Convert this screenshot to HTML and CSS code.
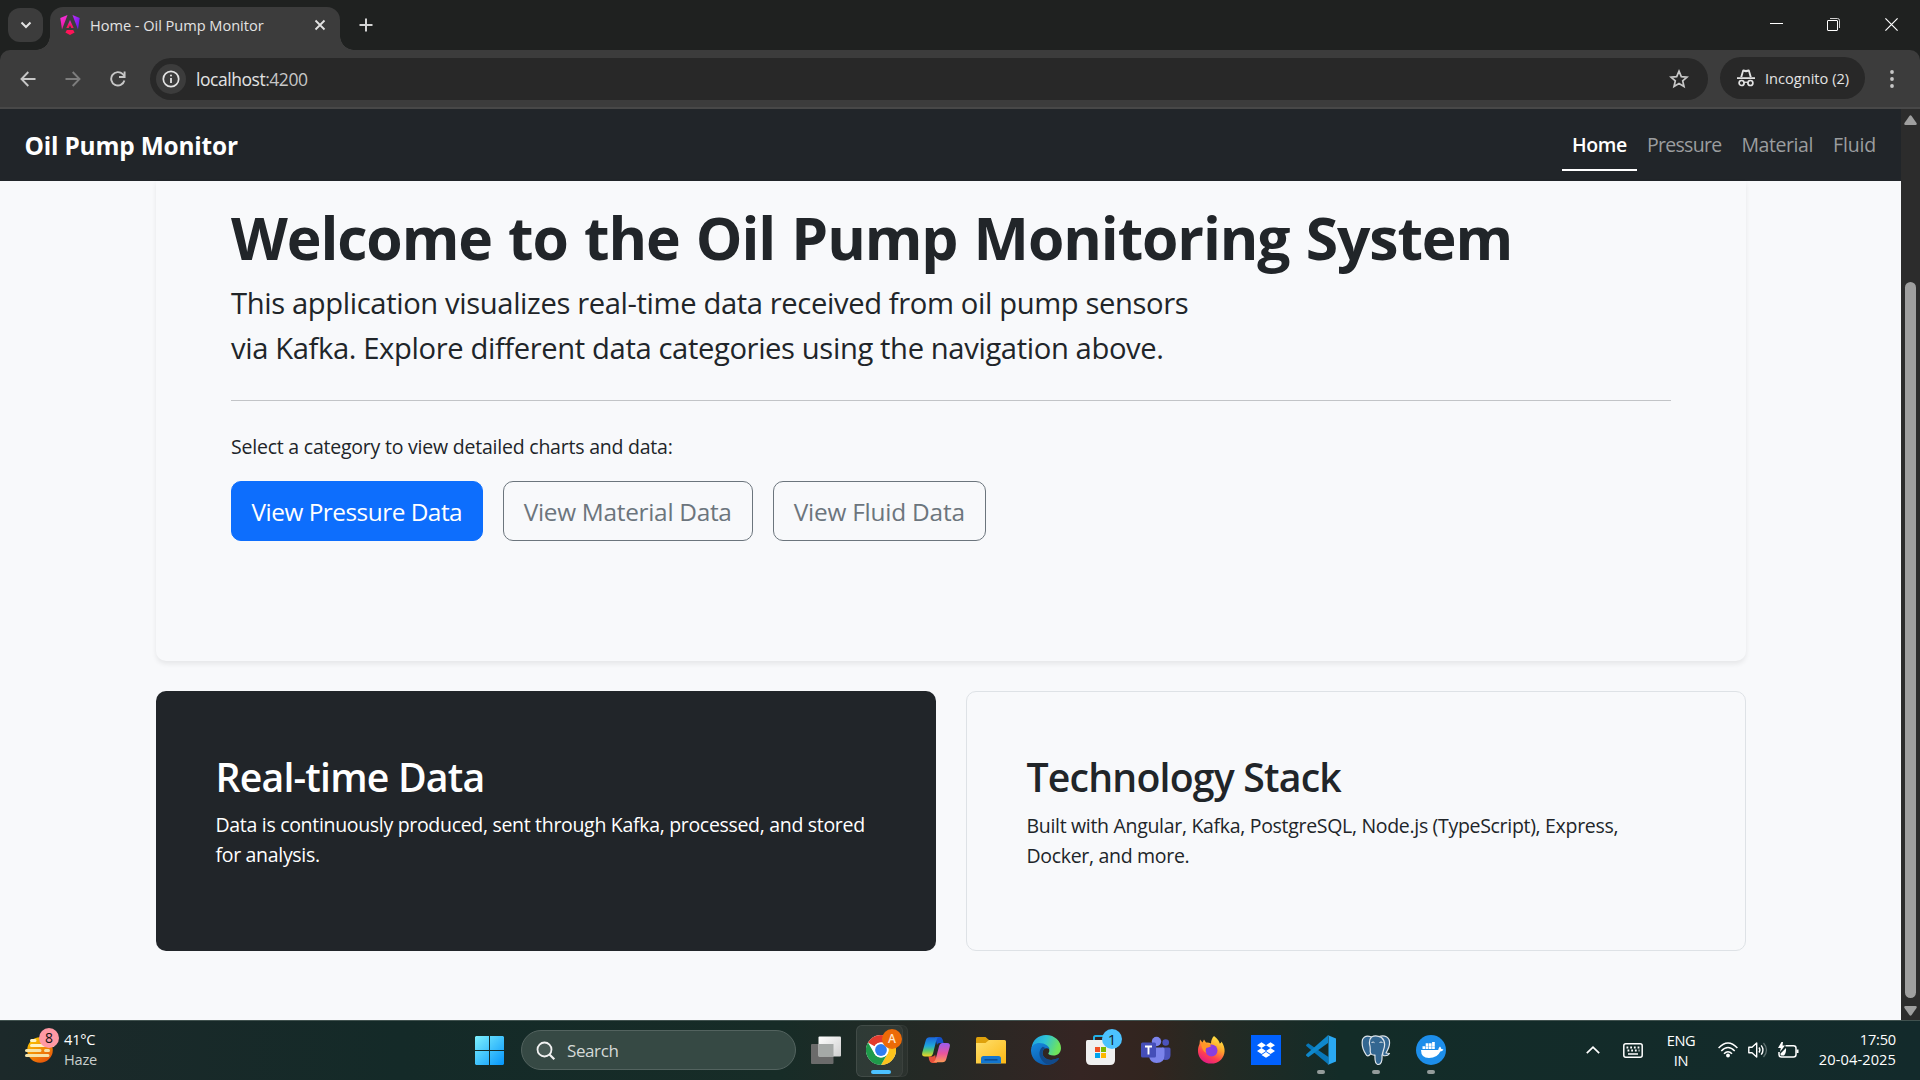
FILE: index.html
```html
<!DOCTYPE html>
<html lang="en">
<head>
<meta charset="utf-8">
<title>Home - Oil Pump Monitor</title>
<link rel="stylesheet" href="styles.css">
</head>
<body>
<div class="screen">
  <header class="tabstrip">
    <div class="tab-search"><svg width="12" height="8" viewBox="0 0 12 8"><path d="M1.5 1.5 6 6l4.500-4.500" fill="none" stroke="#e3e3e3" stroke-width="2"/></svg></div>
    <div class="tab">
      <svg class="favicon" width="20" height="20" viewBox="0 0 20 20">
        <defs>
          <linearGradient id="ngA" x1="0" y1="0" x2="0.300" y2="1"><stop offset="0" stop-color="#f535e8"/><stop offset="1" stop-color="#f0159a"/></linearGradient>
          <linearGradient id="ngB" x1="0" y1="0" x2="1" y2="1"><stop offset="0" stop-color="#c22df5"/><stop offset="1" stop-color="#5b14f0"/></linearGradient>
          <linearGradient id="ngC" x1="0" y1="0" x2="0" y2="1"><stop offset="0" stop-color="#d52be0"/><stop offset="0.700" stop-color="#fb1560"/></linearGradient>
        </defs>
        <path d="M0.300 3 7.500 0 2 14.500Z" fill="url(#ngA)"/><path d="M12.500 0 19.700 3 18 14.500Z" fill="url(#ngB)"/>
        <path d="M6.800 15H13.200L14.600 17.500 10 20 5.400 17.500Z" fill="#ff1458"/>
        <path d="M10 5 13.700 13H11.300L10 10.200 8.700 13H6.300Z" fill="url(#ngC)"/>
      </svg>
      <span class="tab-title">Home - Oil Pump Monitor</span>
      <svg class="tab-close" width="12" height="12" viewBox="0 0 12 12"><path d="M1.500 1.500l9 9m0-9l-9 9" stroke="#e3e3e3" stroke-width="1.800"/></svg>
    </div>
    <svg class="new-tab" width="14" height="14" viewBox="0 0 14 14"><path d="M7 0.500v13M0.500 7h13" stroke="#d4d4d4" stroke-width="2"/></svg>
    <div class="window-buttons">
      <svg width="13" height="13" viewBox="0 0 13 13"><path d="M0 5.500h13" stroke="#fff"/></svg>
      <svg width="13" height="13" viewBox="0 0 13 13"><path d="M3 .5h7.500a2 2 0 0 1 2 2V10" fill="none" stroke="#cfcfcf"/><rect x=".5" y="2.500" width="10" height="10" rx="0.500" fill="none" stroke="#fff"/></svg>
      <svg width="13" height="13" viewBox="0 0 13 13"><path d="M.4.4l12.200 12.200m0-12.200L.4 12.600" stroke="#fff" stroke-width="1.200"/></svg>
    </div>
  </header>

  <div class="toolbar">
    <svg class="tool back" width="16" height="16" viewBox="0 0 16 16"><path d="M15.500 8H2M8.300 1 1.500 8l6.800 7" fill="none" stroke="#c7c7c7" stroke-width="1.900"/></svg>
    <svg class="tool forward" width="16" height="16" viewBox="0 0 16 16"><path d="M.5 8H14M7.700 1l6.800 7-6.800 7" fill="none" stroke="#7d7d7d" stroke-width="1.900"/></svg>
    <svg class="tool reload" width="16" height="16" viewBox="0 0 16 16"><path d="M14.400 9.500A6.700 6.700 0 1 1 12.800 3.200L14.500 5" fill="none" stroke="#c7c7c7" stroke-width="1.900"/><path d="M14.600.5V6H9" fill="none" stroke="#c7c7c7" stroke-width="1.900"/></svg>
    <div class="address">
      <span class="site-info"><svg width="18" height="18" viewBox="0 0 18 18"><circle cx="9" cy="9" r="7.700" fill="none" stroke="#e3e3e3" stroke-width="1.700"/><path d="M9 8v5" stroke="#e3e3e3" stroke-width="1.800"/><circle cx="9" cy="5.600" r="1" fill="#e3e3e3"/></svg></span>
      <span class="url">localhost<span class="port">:4200</span></span>
      <svg class="star" width="20" height="20" viewBox="0 0 20 20"><path d="M10 2.200 12.300 7.600 18.100 8.100 13.700 11.900 15 17.600 10 14.600 5 17.600 6.300 11.900 1.900 8.100 7.700 7.600Z" fill="none" stroke="#c7c7c7" stroke-width="1.700"/></svg>
    </div>
    <div class="incognito">
      <svg width="18" height="18" viewBox="0 0 18 18"><path d="M0 8.300h18v1.700H0zM3.300 8 5.300 1.200Q5.600.3 6.600.5L9 1.100 11.400.5q1-.2 1.300.7L14.700 8h-2L11.300 2.700 9 3.200 6.700 2.700 5.300 8Z" fill="#e3e3e3"/><circle cx="4.600" cy="14" r="2.500" fill="none" stroke="#e3e3e3" stroke-width="1.700"/><circle cx="13.400" cy="14" r="2.500" fill="none" stroke="#e3e3e3" stroke-width="1.700"/><path d="M7 13.600q2-1 4 0" fill="none" stroke="#e3e3e3" stroke-width="1.400"/></svg>
      <span>Incognito (2)</span>
    </div>
    <svg class="menu" width="4" height="18" viewBox="0 0 4 18"><g fill="#c7c7c7"><circle cx="2" cy="2" r="1.900"/><circle cx="2" cy="9" r="1.900"/><circle cx="2" cy="16" r="1.900"/></g></svg>
  </div>

  <div class="viewport">
    <div class="page">
      <nav class="navbar">
        <a class="brand">Oil Pump Monitor</a>
        <div class="nav-links">
          <a class="nav-link active">Home</a><a class="nav-link pressure">Pressure</a><a class="nav-link material">Material</a><a class="nav-link fluid">Fluid</a>
        </div>
      </nav>
      <main class="content">
        <section class="hero">
          <h1>Welcome to the Oil Pump Monitoring System</h1>
          <p class="lead">This application visualizes real-time data received from oil pump sensors<br>via Kafka. Explore different data categories using the navigation above.</p>
          <hr>
          <p class="hint">Select a category to view detailed charts and data:</p>
          <div class="actions">
            <a class="btn primary">View Pressure Data</a>
            <a class="btn material-btn">View Material Data</a>
            <a class="btn fluid-btn">View Fluid Data</a>
          </div>
        </section>
        <div class="cards">
          <section class="card dark"><h2>Real-time Data</h2><p>Data is continuously produced, sent through Kafka, processed, and stored<br>for analysis.</p></section>
          <section class="card light"><h2>Technology Stack</h2><p>Built with Angular, Kafka, PostgreSQL, Node.js (TypeScript), Express,<br>Docker, and more.</p></section>
        </div>
      </main>
    </div>
    <div class="scrollbar">
      <svg width="13" height="10" viewBox="0 0 13 10"><path d="M5.400 1Q6.500-.4 7.600 1L12.500 8q.8 1.800-1 2h-10Q-.3 9.800.5 8Z" fill="#9f9f9f"/></svg>
      <div class="thumb"></div>
      <svg width="13" height="10" viewBox="0 0 13 10"><path d="M5.400 9Q6.500 10.400 7.600 9L12.500 2q.8-1.800-1-2h-10Q-.3.2.5 2Z" fill="#9f9f9f"/></svg>
    </div>
  </div>

  <footer class="taskbar">
    <div class="weather">
      <div class="weather-icon">
        <svg width="30" height="28" viewBox="0 0 30 28"><defs><linearGradient id="sun" x1="0" y1="0" x2=".6" y2="1"><stop offset="0" stop-color="#ffd400"/><stop offset="1" stop-color="#e8590a"/></linearGradient></defs><circle cx="15" cy="14" r="12.800" fill="url(#sun)"/><g stroke-width="3" stroke-linecap="round" stroke="#f6e3a8"><path d="M6.500 4.500H10M6.500 9.500H28" stroke="#fff3c4"/><path d="M1.500 14.500H15M20.500 14.500H23.500M1.500 19.500H23"/></g></svg>
        <span class="count">8</span>
      </div>
      <div class="weather-text"><span>41°C</span><span class="dim">Haze</span></div>
    </div>
    <div class="start"><svg width="29" height="29" viewBox="0 0 29 29"><defs><linearGradient id="win" gradientUnits="userSpaceOnUse" x1="0" y1="0" x2="29" y2="29"><stop offset="0" stop-color="#7df1fd"/><stop offset="1" stop-color="#0595fb"/></linearGradient></defs><path d="M1 0H14V14H0V1ZM15 0H28L29 1V14H15ZM0 15H14V29H1L0 28ZM15 15H29V28L28 29H15Z" fill="url(#win)"/></svg></div>
    <div class="search"><svg width="20" height="20" viewBox="0 0 20 20"><circle cx="8.500" cy="8.500" r="7" fill="#ffffff18" stroke="#f1f1f1" stroke-width="1.800"/><path d="M13.500 13.500 18.300 18.300" stroke="#f1f1f1" stroke-width="2.200"/></svg><span>Search</span></div>
    <div class="apps">
      <div class="app"><svg width="30" height="30" viewBox="0 0 30 30"><defs><linearGradient id="tv" x1="0" y1="0" x2="1" y2="1"><stop offset="0" stop-color="#fff"/><stop offset="1" stop-color="#cfcfcf"/></linearGradient></defs><rect y="9" width="22.500" height="20" rx="1" fill="#6b6b6b"/><rect x="7.500" y="1.500" width="22.500" height="20" rx="1" fill="url(#tv)"/><path d="M7.500 9H22.500V21.500H7.500Z" fill="#a5a9a7"/></svg></div>
      <div class="app chrome">
        <svg width="30" height="30" viewBox="0 0 30 30"><circle cx="15" cy="15" r="15" fill="#fff"/><path d="M15 0A15 15 0 0 1 28 7.500H15A7.500 7.500 0 0 0 8.500 11.250L2 7.500A15 15 0 0 1 15 0Z" fill="#e33b2e"/><path d="M28 7.500A15 15 0 0 1 15 30L21.500 18.750A7.500 7.500 0 0 0 15 7.500Z" fill="#fcc31c"/><path d="M2 7.500 8.500 18.750A7.500 7.500 0 0 0 21.500 18.750L15 30A15 15 0 0 1 2 7.500Z" fill="#1f9a4a"/><circle cx="15" cy="15" r="7.500" fill="#fff"/><circle cx="15" cy="15" r="5.900" fill="#2f7df0"/></svg>
        <span class="badge orange">A</span><i class="run active"></i>
      </div>
      <div class="app"><svg width="30" height="30" viewBox="0 0 30 30"><defs><linearGradient id="coA" x1="0" y1="0" x2="0" y2="1"><stop offset="0" stop-color="#1a66dc"/><stop offset=".45" stop-color="#1fa5dc"/><stop offset=".7" stop-color="#5cc96a"/><stop offset="1" stop-color="#f5d423"/></linearGradient><linearGradient id="coB" x1="0" y1="0" x2="0" y2="1"><stop offset="0" stop-color="#9a5cf0"/><stop offset=".55" stop-color="#ea559c"/><stop offset="1" stop-color="#fb9a55"/></linearGradient></defs><path d="M14 2h5q2 0 2.800 3l.8 3h-4q-2 0-2.600 2z" fill="#1450c8"/><path d="M16 28h-5q-2 0-2.800-3L7.500 21.500h4q2 0 2.600-2z" fill="#e8503c"/><path d="M8.500 2.300H18q-2 .6-2.700 3.200L12 18.500Q11.200 21.500 8.500 21.500H4Q.2 21.500 1.300 17.500L4.700 5.500Q5.600 2.300 8.500 2.300Z" fill="url(#coA)"/><path d="M21.500 27.300H12q2-.6 2.700-3.200L18 11.500Q18.800 8 21.500 8H26q3.800 0 2.700 4L25.300 24Q24.400 27.300 21.500 27.300Z" fill="url(#coB)"/></svg></div>
      <div class="app"><svg width="30" height="30" viewBox="0 0 30 30"><defs><linearGradient id="fo" x1="0" y1="0" x2="1" y2="1"><stop offset="0" stop-color="#ffe06e"/><stop offset="1" stop-color="#fbb814"/></linearGradient></defs><path d="M0 3.500Q0 2 1.500 2H9.500L13 5V10H0Z" fill="#dfa10c"/><path d="M0 8H9.500L13 5H28.500Q30 5 30 6.500V28.500H0Z" fill="url(#fo)"/><path d="M5 28.500V23.500Q5 21 7.500 21H22.500Q25 21 25 23.500V28.500Z" fill="#1376cf"/><path d="M8.500 24.800H21.500" stroke="#0a4c92" stroke-width="1.500"/></svg></div>
      <div class="app"><svg width="30" height="30" viewBox="0 0 30 30"><defs><linearGradient id="edA" x1="0" y1="0" x2="1" y2=".3"><stop offset="0" stop-color="#1b9de2"/><stop offset=".5" stop-color="#2fc3d6"/><stop offset="1" stop-color="#6fe45b"/></linearGradient><linearGradient id="edB" x1="0" y1="0" x2=".6" y2="1"><stop offset="0" stop-color="#168ae0"/><stop offset="1" stop-color="#0b57a8"/></linearGradient></defs><path d="M.5 13C1.500 5 7.500 0 15 0 24 0 30 6.500 30 13 30 18 26.500 20.500 22.500 20.500 19 20.500 17 19.500 17.300 18.300 18.500 17 18.500 15.500 18 14 16.500 9.500 7 7 .5 13Z" fill="url(#edA)"/><path d="M0 15C.2 10.500 4 8 8.500 8 14 8 18.200 11.500 18.500 14 15 12 11.500 14 11.500 18 11.500 23 17.500 26 23 24.500 25.500 24 27 22.500 28 23.500 25.500 27.500 21 30 15.500 30 6.500 30-.3 23.500 0 15Z" fill="url(#edB)"/><path d="M11.800 11.800C8.500 14 7.500 19 9.500 23 11.500 27 15 29.500 18 29.700 22 29 25.800 27 28 23.500 27 22.500 25.500 24 23 24.500 17.500 26 11.500 23 11.500 18 11.500 15.500 13 13.600 15 13.200Z" fill="#114a8b"/></svg></div>
      <div class="app"><svg width="30" height="32" viewBox="0 0 30 32"><path d="M8 8V3.500Q8 2 9.500 2H20Q21.500 2 21.500 3.500V8" fill="none" stroke="#22b1e6" stroke-width="2"/><path d="M0 7.500Q0 6 1.500 6H27.500Q29 6 29 7.500V26Q29 31 24 31H5Q0 31 0 26Z" fill="#f0f0f0"/><path d="M9 13h5v5H9z" fill="#ef5024"/><path d="M15 13h5v5h-5z" fill="#7eb900"/><path d="M9 19h5v5H9z" fill="#00a3ee"/><path d="M15 19h5v5h-5z" fill="#fdb800"/></svg><span class="badge blue">1</span></div>
      <div class="app"><svg width="30" height="30" viewBox="0 0 30 30"><circle cx="24.700" cy="7.500" r="3.300" fill="#4b53bc"/><path d="M21 12.500H28Q29.500 12.500 29.500 14V20Q29.500 25 24.500 25 21 25 21 21Z" fill="#4b53bc"/><circle cx="15.500" cy="6.500" r="4.700" fill="#7b83eb"/><path d="M9 12.500H22Q23.500 12.500 23.500 14V20Q23.500 28 15.500 28 9 28 8 21Z" fill="#7b83eb"/><rect y="7.500" width="15" height="15" rx="1.500" fill="#454eb8"/><path d="M4 11.500H11M7.500 11.500V19.500" stroke="#fff" stroke-width="1.900"/></svg></div>
      <div class="app"><svg width="30" height="30" viewBox="0 0 30 30"><defs><linearGradient id="ff" x1=".8" y1="0" x2=".3" y2="1"><stop offset="0" stop-color="#fff04a"/><stop offset=".4" stop-color="#ffa42a"/><stop offset=".72" stop-color="#ff4050"/><stop offset="1" stop-color="#e01888"/></linearGradient></defs><path d="M18 1C22 4 23.500 6.500 23.700 8.500 25.500 8 25.500 6.500 25.500 6.500 30 13 29.500 20 25 24.700 19.500 30 10.500 29.800 5.500 24.700 1.500 20.500 1 14 3.500 9L4 4.500 6.500 7.500 8 4.500 10 7.500Q12.500 7 15 8.500 15 4 18 1Z" fill="url(#ff)"/><circle cx="15.500" cy="15.500" r="6" fill="#8a3ee0"/><path d="M5 9Q9.500 7 15.500 11 12.500 13 10.500 12.800 8.500 15 10.500 18 6 16 5 9Z" fill="#ff9626"/></svg></div>
      <div class="app"><svg width="30" height="30" viewBox="0 0 30 30"><path d="M0 0H30V30H0Z" fill="#0061fe"/><path d="M10.500 7.300 15 10.200 10.500 13.100 6 10.200ZM19.500 7.300 24 10.200 19.500 13.100 15 10.200ZM10.500 13.100 15 16 10.500 18.900 6 16ZM19.500 13.100 24 16 19.500 18.900 15 16ZM15 17 19.500 19.900 15 22.800 10.500 19.900Z" fill="#fff"/></svg></div>
      <div class="app"><svg width="30" height="30" viewBox="0 0 30 30"><path d="M0 10 2.200 8.200 22.500 22V29.500L.3 10.900Z" fill="#0877b9"/><path d="M.3 19.200 22 0.300V8L2.200 22.200 0 20.500Z" fill="#0f88cc"/><path d="M21.500 0 30 3.500V26.500L21.500 30Q22.500 29.500 22.500 28V2Q22.500.5 21.500 0Z" fill="#2aa8f2"/></svg><i class="run"></i></div>
      <div class="app"><svg width="30" height="30" viewBox="0 0 30 30"><g fill="#336791" stroke="#dfe5ea" stroke-width="1.200" stroke-linejoin="round"><path d="M18 1.500Q25-.5 28 4.500 30 10 25 18L28.500 18.500Q26.500 21.500 22 20.500Z"/><path d="M10.500 2Q4 -.8 1.500 4.500 0 12 5 19.500 6.500 22.500 9.500 19L11.500 16.500Z"/><path d="M10.500 2Q15-.5 20.500 2.500 25.500 7 22.500 15L21 20.500Q21.500 29.500 17 29.500 13.500 29 14 20 9.500 20.500 9.200 16.500 9.500 12 8.500 9 8 4.500 10.500 2Z"/></g><path d="M10.500 7.500q2-1 3 .2M18.500 7.500q1.500-1 3 0" stroke="#dfe5ea" fill="none"/></svg><i class="run"></i></div>
      <div class="app"><svg width="30" height="30" viewBox="0 0 30 30"><circle cx="15" cy="15" r="15" fill="#1d8eea"/><path d="M5 15H22.200Q22.500 12.500 24 11.500 25.200 12.500 25.300 14 26.500 13.800 27.500 14.500 26.500 16.500 24.300 16.500 21.500 23 13 23 5 23 5 15Z" fill="#fff"/><path d="M6.500 11.300h2.700V14H6.500zM9.700 11.300h2.700V14H9.700zM12.900 11.300h2.700V14h-2.700zM16.100 11.300h2.700V14h-2.700zM9.700 8.200h2.700V11H9.700zM12.900 8.200h2.700V11h-2.700zM16.100 7h2.700v4h-2.700z" fill="#fff"/></svg><i class="run"></i></div>
    </div>
    <div class="tray">
      <svg width="14" height="8" viewBox="0 0 14 8"><path d="M.8 7.200 7 1.200 13.200 7.200" fill="none" stroke="#fff" stroke-width="1.700"/></svg>
      <svg class="keyboard" width="20" height="15" viewBox="0 0 20 15"><rect x=".8" y=".8" width="18.400" height="13.400" rx="2" fill="none" stroke="#fff" stroke-width="1.500"/><path d="M3.500 4.500h13M4.500 7.500h12" stroke="#fff" stroke-width="1.800" stroke-dasharray="1.800 1.900"/><path d="M5 11h10" stroke="#fff" stroke-width="1.500"/></svg>
      <div class="lang"><span>ENG</span><span>IN</span></div>
      <svg class="wifi" width="20" height="16" viewBox="0 0 20 16"><g fill="none" stroke="#fff" stroke-width="1.500"><path d="M.6 6Q10-3.800 19.400 6"/><path d="M3.300 9Q10 2 16.700 9"/><path d="M6 11.800Q10 7.500 14 11.800"/></g><circle cx="10" cy="13.500" r="1.900" fill="#fff"/></svg>
      <svg class="volume" width="20" height="16" viewBox="0 0 20 16"><path d="M.8 5.300H4L8.700 1V15L4 10.700H.8Z" fill="none" stroke="#fff" stroke-width="1.400" stroke-linejoin="round"/><path d="M11 5.500Q12.800 8 11 10.500M13.200 3.300Q16.700 8 13.200 12.700" fill="none" stroke="#fff" stroke-width="1.400"/><path d="M15.500 1Q21.500 8 15.500 15" fill="none" stroke="#5e706f" stroke-width="1.300"/></svg>
      <svg class="battery" width="21" height="17" viewBox="0 0 21 17"><path d="M7.500 3.700H15.500Q18 3.700 18 6V12.500Q18 15 15.500 15H3.500Q1 15 1 12.500V10" fill="none" stroke="#fff" stroke-width="1.500"/><path d="M18.500 7.500h2v3.500h-2zM2.500 11.500 8 6Q8.500 10.500 6 13.500H3.500Q2.500 13.500 2.500 12.500Z" fill="#fff"/><path d="M3.500 0H5L4.500 3.500H7L2 10 2.800 6H0Z" fill="#fff"/></svg>
      <div class="clock"><span class="time">17:50</span><span>20-04-2025</span></div>
    </div>
  </footer>
</div>
</body>
</html>
```

FILE: styles.css
```css
* { box-sizing: border-box; }
body { margin: 0; overflow: hidden; font-family: "Open Sans", "Noto Sans", sans-serif; }
h1, h2, p, hr { margin: 0; }
svg { display: block; flex: none; }
.screen { width: 1920px; height: 1080px; display: flex; flex-direction: column; background: #1f2120; white-space: nowrap; }

/* Tab strip */
.tabstrip { height: 50px; flex: none; display: flex; align-items: flex-start; padding-left: 8px; background: #1f2120; }
.tab-search { width: 35px; height: 34px; margin-top: 8px; border-radius: 12px; background: #3c3c3c; display: flex; align-items: center; justify-content: center; }
.tab { position: relative; width: 290px; height: 43px; margin: 7px 0 0 7px; padding: 0 15px 0 10px; border-radius: 13px 13px 0 0; background: #3c3c3c; display: flex; align-items: center; }
.tab::before, .tab::after { content: ""; position: absolute; bottom: 0; width: 14px; height: 14px; }
.tab::before { left: -14px; background: radial-gradient(circle at 0 0, transparent 13.5px, #3c3c3c 14px); }
.tab::after { right: -14px; background: radial-gradient(circle at 100% 0, transparent 13.5px, #3c3c3c 14px); }
.favicon { margin-bottom: 7px; }
.tab-title { margin: 0 0 8px 10px; font-size: 14.6px; line-height: 20px; letter-spacing: -0.04px; color: #e3e3e3; }
.tab-close { margin: 0 -1px 7px auto; }
.new-tab { margin: 18px 0 0 18.5px; }
.window-buttons { display: flex; gap: 44px; margin: 18px 22px 0 auto; }
.window-buttons svg:last-child { margin-left: 1px; }

/* Toolbar */
.toolbar { height: 59px; flex: none; display: flex; align-items: flex-start; padding-left: 20px; background: #3c3c3c; border-bottom: 2px solid #484848; border-radius: 10px 10px 0 0; }
.tool { margin-top: 21px; }
.forward, .reload { margin-left: 29px; }
.address { width: 1558px; height: 42px; margin: 8px 0 0 24px; padding: 0 19px 0 6px; border-radius: 21px; background: #282828; display: flex; align-items: center; }
.site-info { width: 30px; height: 30px; border-radius: 50%; background: #3c3c3c; display: flex; align-items: center; justify-content: center; }
.url { margin-left: 10px; font-size: 17.5px; line-height: 24px; letter-spacing: -0.46px; color: #e3e3e3; }
.port { color: #c7c7c7; }
.star { margin-left: auto; }
.incognito { width: 145px; height: 42px; margin: 7px 0 0 12px; padding: 0 0 0 17px; border-radius: 21px; background: #282828; display: flex; align-items: center; gap: 10px; color: #e3e3e3; font-size: 14.6px; }
.menu { margin: 20px 0 0 25px; }

/* Web page */
.viewport { height: 911px; flex: none; display: flex; }
.page { width: 1901px; background: #f8f9fb; color: #212529; display: flex; flex-direction: column; }
.navbar { height: 72px; padding: 0 15px 0 24.5px; background: #212529; display: flex; align-items: center; justify-content: space-between; }
.brand { padding-top: 1px; font-size: 24.4px; font-weight: 700; letter-spacing: -0.17px; color: #fff; }
.nav-links { display: flex; }
.nav-link { height: 52px; padding: 11px 10px 0; font-size: 19.5px; line-height: 30px; color: #9b9d9f; }
.active.nav-link { color: #fff; font-weight: 600; letter-spacing: -0.35px; border-bottom: 2px solid #fff; }
.pressure { letter-spacing: -0.7px; }
.material { letter-spacing: -0.42px; }
.fluid { letter-spacing: -0.16px; }
.content { width: 1590px; margin-left: 156px; }
.hero { height: 480px; padding: 20px 75px; border-radius: 0 0 10px 10px; box-shadow: 0 2.5px 5px rgba(0, 0, 0, .075); }
h1 { font-size: 58.8px; line-height: 72px; font-weight: 700; letter-spacing: -1.1px; word-spacing: 2px; }
.lead { margin-top: 8px; font-size: 29.2px; line-height: 45px; letter-spacing: -0.38px; }
hr { height: 1px; margin: 29px 0 31px; border: 0; background: #c2c4c7; }
.hint { font-size: 19.5px; line-height: 30px; letter-spacing: -0.22px; }
.actions { display: flex; gap: 20px; margin-top: 19px; }
.btn { height: 60px; padding: 1px 20px 0; border: 1px solid #6c757d; border-radius: 10px; font-size: 24.4px; line-height: 58px; color: #6c757d; }
.primary { padding: 1px 19.5px 0; border-color: #0d6efd; background: #0d6efd; color: #fff; letter-spacing: -0.5px; }
.material-btn { letter-spacing: -0.29px; }
.fluid-btn { letter-spacing: -0.21px; }
.cards { display: grid; grid-template-columns: 1fr 1fr; gap: 30px; margin-top: 30px; }
.card { height: 260px; padding: 62px 59.5px 0; border-radius: 10px; }
.dark { background: #212529; color: #fff; }
.light { padding-top: 61px; border: 1px solid #dee2e6; }
h2 { font-size: 39.2px; line-height: 48px; font-weight: 600; letter-spacing: -0.8px; }
.card p { margin-top: 9px; font-size: 19.5px; line-height: 30px; letter-spacing: -0.31px; }
.light p { margin-top: 10px; }

.scrollbar { width: 19px; background: #2c2c2c; display: flex; flex-direction: column; align-items: center; padding: 6px 0 4px; }
.thumb { width: 11px; height: 716px; margin: 157px 0 8px; border-radius: 6px; background: #9f9f9f; }

/* Taskbar */
.taskbar { height: 60px; flex: none; display: flex; align-items: center; padding-bottom: 1px; border-top: 1px solid #41524f; color: #fff; font-size: 14.6px; line-height: 20px;
  background: linear-gradient(90deg, #1c292a 0, #142a28 400px, #172c27 780px, #252925 930px, #352523 1080px, #32251f 1150px, #222a24 1230px, #132c28 1340px, #132a2b 100%); }
.weather { width: 462px; padding: 0 0 1px 25px; display: flex; align-items: center; }
.weather-icon { position: relative; }
.count { position: absolute; left: 14px; top: -8px; width: 20px; height: 20px; border-radius: 50%; background: #ff99a4; color: #111; text-align: center; font-size: 14px; }
.weather-text { margin: -1px 0 0 9px; display: flex; flex-direction: column; letter-spacing: -0.2px; }
.dim { color: #c8cecd; }
.start { width: 55px; display: flex; justify-content: center; }
.search { width: 275px; height: 40px; margin-left: 4px; padding: 1px 0 0 14px; border: 1px solid #53635f; border-radius: 20px; background: #364944; display: flex; align-items: center; gap: 11px; font-size: 17px; letter-spacing: -0.4px; color: #d5dad8; }
.apps { display: flex; margin-left: 2.5px; }
.app { position: relative; width: 55px; height: 50px; display: flex; align-items: center; justify-content: center; }
.chrome::before, .chrome::after { content: ""; position: absolute; top: 0; left: 2.5px; width: 50px; height: 50px; border: 1px solid #ffffff0c; border-radius: 6px; background: #ffffff0a; }
.chrome::before { width: 45px; }
.chrome svg { position: relative; z-index: 1; }
.badge { position: absolute; z-index: 2; left: 28.5px; top: 4px; width: 20px; height: 20px; border-radius: 50%; text-align: center; }
.orange { background: #ec6a07; color: #ffe5cc; font-size: 12px; font-weight: 600; }
.blue { background: #4cc2ff; color: #10232c; font-size: 15px; }
.run { position: absolute; z-index: 1; bottom: 1px; left: 23.5px; width: 8px; height: 4px; border-radius: 2px; background: #949c9b; }
.run.active { left: 17.5px; width: 20px; background: #4cc2ff; }
.tray { display: flex; align-items: center; flex: 1; margin-left: 127.5px; padding-right: 24px; }
.keyboard { margin-left: 23px; }
.lang { width: 40px; margin: -1px 0 0 18px; display: flex; flex-direction: column; align-items: center; letter-spacing: -0.4px; }
.wifi { margin-left: 17px; }
.volume, .battery { margin-left: 10px; }
.clock { margin: -3px 0 0 auto; display: flex; flex-direction: column; align-items: flex-end; letter-spacing: 0.1px; }
.time { letter-spacing: -0.2px; }
```
